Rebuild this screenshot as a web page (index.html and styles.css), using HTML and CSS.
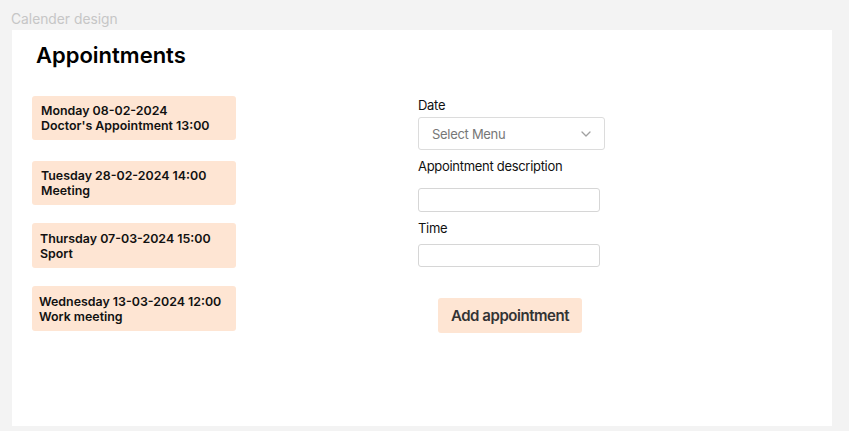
FILE: index.html
```html
<!DOCTYPE html>
<html>
<head>
<meta charset="utf-8">
<link rel="stylesheet" href="styles.css">
</head>
<body>
<div class="page-title">Calender design</div>
<main class="panel">
  <h1 class="heading">Appointments</h1>
  <div class="content">
    <div class="list">
      <div class="card card-first"><div>Monday 08-02-2024</div><div>Doctor's Appointment 13:00</div></div>
      <div class="card"><div>Tuesday 28-02-2024 14:00</div><div>Meeting</div></div>
      <div class="card card-tall card-narrow"><div>Thursday 07-03-2024 15:00</div><div>Sport</div></div>
      <div class="card card-tall card-narrower"><div>Wednesday 13-03-2024 12:00</div><div>Work meeting</div></div>
    </div>
    <form class="form">
      <label class="label">Date</label>
      <div class="select">
        <span>Select Menu</span>
        <svg class="chev" width="10" height="6" viewBox="0 0 10 6"><path d="M1 1l4 4 4-4" fill="none" stroke="#a0a0a0" stroke-width="1.3" stroke-linecap="round" stroke-linejoin="round"/></svg>
      </div>
      <label class="label label-gap">Appointment description</label>
      <div class="input input-desc"></div>
      <label class="label label-gap">Time</label>
      <div class="input input-time"></div>
      <div class="btn-row"><button type="button" class="btn">Add appointment</button></div>
    </form>
  </div>
</main>
</body>
</html>
```
FILE: styles.css
```css
* { box-sizing: border-box; }
html, body { margin: 0; padding: 0; }
body {
  background: #f3f3f3;
  font-family: Inter, "Noto Sans", sans-serif;
  width: 849px;
  height: 431px;
  overflow: hidden;
}
.page-title {
  height: 30px;
  padding: 11px 0 3px 11px;
  font-size: 13.8px;
  line-height: 16px;
  color: #c6c6c6;
}
.panel {
  background: #fff;
  margin: 0 17px 0 12px;
  height: 396px;
  padding: 11px 20px 0 20px;
}
.heading {
  margin: 0 0 27px 4px;
  font-size: 22px;
  line-height: 28px;
  font-weight: 600;
  color: #000;
}
.content {
  display: flex;
  align-items: flex-start;
}
.list {
  width: 204px;
  display: flex;
  flex-direction: column;
  gap: 18px;
}
.card {
  background: #fee5d3;
  border-radius: 3px;
  height: 44px;
  padding: 7px 4px 0 9px;
  font-size: 12.4px;
  line-height: 15px;
  font-weight: 600;
  letter-spacing: 0;
  white-space: nowrap;
  color: #111;
}
.card-first { margin-bottom: 3px; }
.card-tall { height: 45px; padding-top: 8px; }
.card-narrow { padding-left: 8px; }
.card-narrower { padding-left: 7px; }
.form {
  margin-left: 182px;
  width: 187px;
  display: flex;
  flex-direction: column;
}
.label {
  font-size: 13px;
  line-height: 18px;
  letter-spacing: -0.3px;
  color: #111;
}
.label-gap { margin-top: 7px; }
.select {
  margin-top: 3px;
  height: 33px;
  width: 187px;
  border: 1px solid #dcdcdc;
  border-radius: 3px;
  display: flex;
  align-items: center;
  justify-content: space-between;
  padding: 0 13px 0 13px;
  font-size: 13px;
  letter-spacing: -0.3px;
  color: #777;
}
.input {
  width: 182px;
  height: 24px;
  border: 1px solid #d6d6d6;
  border-radius: 3px;
}
.input-desc { margin-top: 13px; }
.input-time { margin-top: 7px; height: 23px; }
.btn-row {
  width: 182px;
  display: flex;
  margin-top: 31px;
}
.btn {
  margin-left: 20px;
  width: 144px;
  height: 35px;
  border: none;
  border-radius: 3px;
  background: #fee5d3;
  font-family: Inter, "Noto Sans", sans-serif;
  font-size: 15px;
  font-weight: 600;
  letter-spacing: -0.45px;
  color: #333;
  padding: 0;
}
```
